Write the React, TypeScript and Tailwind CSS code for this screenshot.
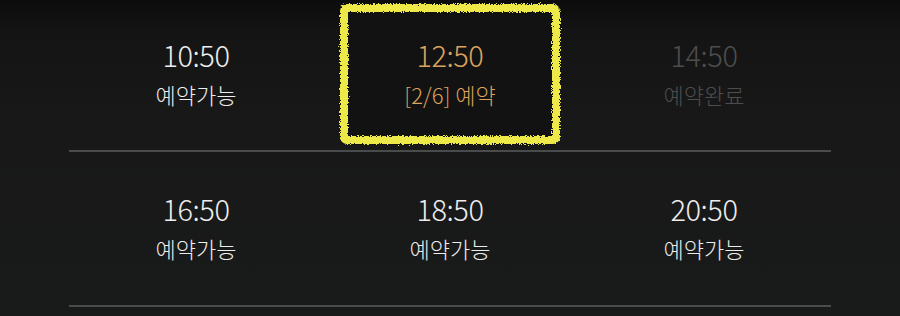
type Status = "open" | "partial" | "done";

interface Slot {
  time: string;
  label: string;
  status: Status;
  highlight?: boolean;
}

const rows: Slot[][] = [
  [
    { time: "10:50", label: "예약가능", status: "open" },
    { time: "12:50", label: "[2/6] 예약", status: "partial", highlight: true },
    { time: "14:50", label: "예약완료", status: "done" },
  ],
  [
    { time: "16:50", label: "예약가능", status: "open" },
    { time: "18:50", label: "예약가능", status: "open" },
    { time: "20:50", label: "예약가능", status: "open" },
  ],
];

const colorFor: Record<Status, string> = {
  open: "text-[#ededed]",
  partial: "text-[#dba35e]",
  done: "text-[#4d4d4d]",
};

// hand-drawn looking marker box around the selected slot
function ChalkBox() {
  return (
    <svg className="absolute left-[14px] top-[2px] w-[226px] h-[148px]" viewBox="0 0 226 148">
      <defs>
        <filter id="chalk" x="-10%" y="-10%" width="120%" height="120%">
          <feTurbulence type="fractalNoise" baseFrequency="0.9" numOctaves="2" seed="3" />
          <feDisplacementMap in="SourceGraphic" scale="5" />
        </filter>
      </defs>
      <rect x="4" y="4" width="218" height="140" rx="3" fill="#121212" />
      <rect
        x="7"
        y="7"
        width="212"
        height="132"
        rx="3"
        fill="none"
        stroke="#ece94a"
        strokeWidth="8"
        filter="url(#chalk)"
      />
    </svg>
  );
}

function SlotCell({ time, label, status, highlight }: Slot) {
  return (
    <div className="relative flex flex-col items-center justify-center h-full">
      {highlight && <ChalkBox />}
      <div className={`relative flex flex-col items-center -mt-[6px] ${colorFor[status]}`}>
        <p className="text-[29px] leading-[36px] font-light tracking-[-0.5px]">{time}</p>
        <p className="text-[22px] leading-[28px] mt-[8px] font-light">{label}</p>
      </div>
    </div>
  );
}

export default function App() {
  return (
    <div
      className="w-[900px] h-[316px] overflow-hidden bg-[linear-gradient(180deg,#0d0c0c_0px,#141414_30px,#181818_120px,#191a1a_100%)]"
      style={{ fontFamily: '"Noto Sans CJK KR", "Noto Sans", sans-serif' }}
    >
      <div className="mx-[69px] flex flex-col">
        {rows.map((row, i) => (
          <div
            key={i}
            className={`grid grid-cols-3 border-b-2 border-[#4a4b4b] ${i === 0 ? "h-[153px] -mt-[1px]" : "h-[155px]"}`}
          >
            {row.map((slot) => (
              <SlotCell key={slot.time} {...slot} />
            ))}
          </div>
        ))}
      </div>
    </div>
  );
}
